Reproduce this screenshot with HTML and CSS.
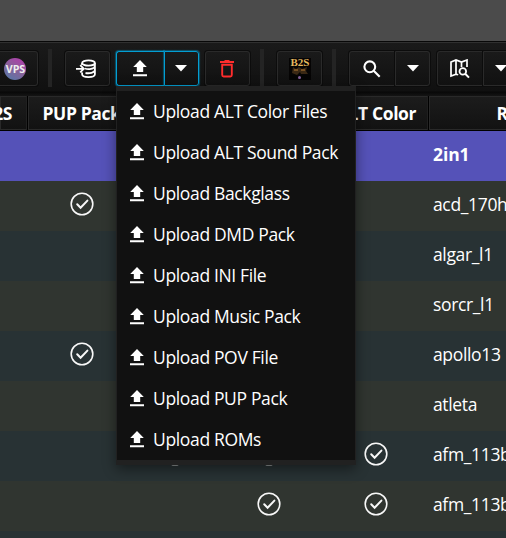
FILE: index.html
```html
<!DOCTYPE html>
<html lang="en">
<head>
<meta charset="utf-8">
<title>Tables</title>
<link rel="stylesheet" href="styles.css">
</head>
<body>
<svg class="defs" width="0" height="0">
  <symbol id="upload" viewBox="0 0 14 17"><path d="M7 0 13.8 7H10.2V12H3.8V7H.2ZM0 14.2H14V16.2H0Z" fill="#fff"/></symbol>
  <symbol id="check" viewBox="0 0 24 24"><g fill="none" stroke="#f8f8f8"><circle cx="12" cy="12" r="10.8" stroke-width="1.6"/><path d="m7.2 12.2 3.4 3.6 6.8-7.2" stroke-width="2" stroke-linecap="round"/></g></symbol>
  <symbol id="caret" viewBox="0 0 12 7"><path d="M0 0H12L6 6.5Z" fill="#fff"/></symbol>
</svg>
<div class="window">
  <div class="titlebar"></div>
  <div class="toolbar">
    <button class="btn vps"><svg width="22" height="22" viewBox="0 0 22 22"><defs><linearGradient id="vg" x1=".8" y1="0" x2=".2" y2="1"><stop offset="0" stop-color="#b23dac"/><stop offset=".5" stop-color="#886199"/><stop offset="1" stop-color="#5678a8"/></linearGradient></defs><circle cx="11" cy="11" r="11" fill="url(#vg)"/><text class="vps-text" x="11.5" y="15" textLength="19.5" lengthAdjust="spacingAndGlyphs">VPS</text></svg></button>
    <span class="sep"></span>
    <button class="btn import"><svg width="21" height="20" viewBox="0 0 21 20" fill="none" stroke="#fff" stroke-width="1.8"><ellipse cx="12.5" cy="4" rx="6.4" ry="2.7"/><path d="M6.1 4V6M18.9 4V15.3C18.9 19 6.1 19 6.1 15.3V13.5M9 9.5C12 10.6 18.9 10 18.9 7M9.5 14C13 14.7 18.9 13.8 18.9 11M0 9.8H7.5M4.2 6.2 7.8 9.8 4.2 13.4"/></svg></button>
    <div class="split active"><button class="btn main"><svg width="14" height="17"><use href="#upload"/></svg></button><button class="btn drop"><svg width="12" height="7"><use href="#caret"/></svg></button></div>
    <button class="btn trash"><svg width="14" height="18" viewBox="0 0 14 18" fill="none" stroke="#ff2d2d" stroke-width="1.9"><path d="M0 2H14M4.5 1H9.5M2.2 4.8H11.8V15Q11.8 16.5 10.3 16.5H3.7Q2.2 16.5 2.2 15Z"/></svg></button>
    <span class="sep"></span>
    <button class="btn b2s"><svg width="22" height="22" viewBox="0 0 22 22"><path d="M0 0H22V22H0Z" fill="#050404"/><path d="M4 9 7 11 10 9 13 11 18 9 17 13 19 16H12L11 14 8 17 3 15Z" fill="#3a2814"/><path d="M5 11h4v2H5zM12 11h4v2h-4z" fill="#765023"/><circle cx="10.5" cy="19.5" r="1.5" fill="#85619c"/><text class="b2s-text" x="11" y="8.2" textLength="19" lengthAdjust="spacingAndGlyphs">B2S</text></svg></button>
    <span class="sep"></span>
    <div class="split search"><button class="btn main"><svg width="18" height="18" viewBox="0 0 18 18" fill="none" stroke="#fff" stroke-width="2.1"><circle cx="6.8" cy="6.8" r="5.4"/><path d="m10.7 10.7 6 6"/></svg></button><button class="btn drop"><svg width="12" height="7"><use href="#caret"/></svg></button></div>
    <div class="split map"><button class="btn main"><svg width="20" height="20" viewBox="0 0 20 20" fill="none" stroke="#fff" stroke-width="1.7"><path d="M6 15.2 1 17V3L6 1 11.5 3 17 1V8M6 1V15.2L8.2 15.8M11.5 3V8"/><circle cx="12.8" cy="12.4" r="3.3" stroke-width="1.8"/><path d="m15.2 14.8 3.8 3.8" stroke-width="2"/></svg></button><button class="btn drop"><svg width="12" height="7"><use href="#caret"/></svg></button></div>
  </div>
  <div class="grid head"><span class="first">B2S</span><span>PUP Pack</span><span></span><span></span><span class="wide">ALT Color</span><span class="wide">ROM</span></div>
  <div class="grid row selected"><i></i><i></i><i></i><i></i><i></i><span>2in1</span></div>
  <div class="grid row"><i></i><i><svg class="check"><use href="#check"/></svg></i><i></i><i></i><i></i><span>acd_170h</span></div>
  <div class="grid row alt"><i></i><i></i><i></i><i></i><i></i><span>algar_l1</span></div>
  <div class="grid row"><i></i><i></i><i></i><i></i><i></i><span>sorcr_l1</span></div>
  <div class="grid row alt"><i></i><i><svg class="check"><use href="#check"/></svg></i><i></i><i></i><i></i><span>apollo13</span></div>
  <div class="grid row"><i></i><i></i><i></i><i></i><i></i><span>atleta</span></div>
  <div class="grid row alt"><i></i><i></i><i><svg class="check"><use href="#check"/></svg></i><i><svg class="check"><use href="#check"/></svg></i><i><svg class="check"><use href="#check"/></svg></i><span>afm_113b</span></div>
  <div class="grid row"><i></i><i></i><i></i><i><svg class="check"><use href="#check"/></svg></i><i><svg class="check"><use href="#check"/></svg></i><span>afm_113b</span></div>
  <div class="grid row alt"></div>
  <div class="menu">
    <div class="item"><svg><use href="#upload"/></svg><span>Upload ALT Color Files</span></div>
    <div class="item"><svg><use href="#upload"/></svg><span>Upload ALT Sound Pack</span></div>
    <div class="item"><svg><use href="#upload"/></svg><span>Upload Backglass</span></div>
    <div class="item"><svg><use href="#upload"/></svg><span>Upload DMD Pack</span></div>
    <div class="item"><svg><use href="#upload"/></svg><span>Upload INI File</span></div>
    <div class="item"><svg><use href="#upload"/></svg><span>Upload Music Pack</span></div>
    <div class="item"><svg><use href="#upload"/></svg><span>Upload POV File</span></div>
    <div class="item"><svg><use href="#upload"/></svg><span>Upload PUP Pack</span></div>
    <div class="item"><svg><use href="#upload"/></svg><span>Upload ROMs</span></div>
  </div>
</div>
</body>
</html>
```
FILE: styles.css
```css
* { box-sizing: border-box; }
body { margin: 0; background: #283234; color: #fff; font: 17.5px "Open Sans", "Noto Sans", sans-serif; letter-spacing: -0.35px; }
.defs { display: block; position: absolute; }
.window { position: relative; width: 506px; height: 538px; overflow: hidden; }
.titlebar { height: 43px; background: #4b4b4b; border-bottom: 1px solid #303030; box-shadow: inset 0 -1px #080808; }
.toolbar { display: flex; align-items: flex-start; height: 53px; padding-top: 8px; background: linear-gradient(#1a1a1a, #101010 48px, #080808 49px, #141414 53px); }
.btn { display: flex; flex: none; align-items: center; justify-content: center; width: 45px; height: 35px; margin: 0; padding: 0; background: linear-gradient(#1a1a1a, #111); border: 1px solid #2a2a2a; border-radius: 3px; box-shadow: 0 0 0 1px #0c0c0c; }
.vps { margin-left: -7px; padding-right: 1px; }
.import { padding-right: 2px; }
.sep { flex: none; width: 4px; height: 38px; margin: -2px 13px 0 10px; background: #242424; }
.split { display: flex; flex: none; }
.split .main { width: 46px; border-radius: 3px 0 0 3px; }
.split .drop { width: 35px; border-radius: 0 3px 3px 0; }
.active { margin: 0 6px; }
.active .btn { border-color: #039ed3; box-shadow: 0 0 1px 1px rgba(3,158,211,.45); }
.active .main { width: 48px; border-right: 0; padding-right: 2px; }
.active .drop { padding-right: 2px; }
.trash, .search .main { padding-right: 1px; }
.map { margin-left: 7px; }
.vps-text { font: bold 10.5px "Open Sans", sans-serif; fill: #eee; text-anchor: middle; letter-spacing: 0; }
.b2s-text { font: bold 10px "Liberation Serif", serif; fill: #e4b95e; text-anchor: middle; letter-spacing: 0; }
.grid { display: grid; grid-template-columns: 28px 107px 80px 107px 107px 174px; width: 603px; }
.head { height: 35px; font-weight: 700; letter-spacing: -0.4px; border-bottom: 1px solid #000; background: #000; }
.head > span { display: flex; align-items: center; justify-content: center; background: linear-gradient(#1c1c1c, #121212); border: 1px solid #292929; border-right-color: #202020; margin-right: 1px; padding-left: 1px; }
.head .first { justify-content: flex-end; padding-right: 14px; }
.head .wide { padding-left: 3px; }
.row { height: 50px; background: #303530; }
.row.alt { background: #283234; }
.row.selected { background: #5552b8; font-weight: 700; letter-spacing: -0.1px; }
.row i { display: flex; align-items: center; justify-content: center; padding: 0 0 4px; }
.row span { padding-left: 4px; line-height: 47px; }
.check { width: 24px; height: 24px; }
.menu { position: absolute; left: 116px; top: 86px; width: 240px; height: 379px; border: solid #212121; border-width: 5px 1px; background: #111; box-shadow: 0 4px 12px rgba(0,0,0,.45); }
.item { display: flex; align-items: center; height: 41px; padding: 0 0 1px 12.5px; gap: 9.5px; }
.item svg { width: 14px; height: 17px; }
```
